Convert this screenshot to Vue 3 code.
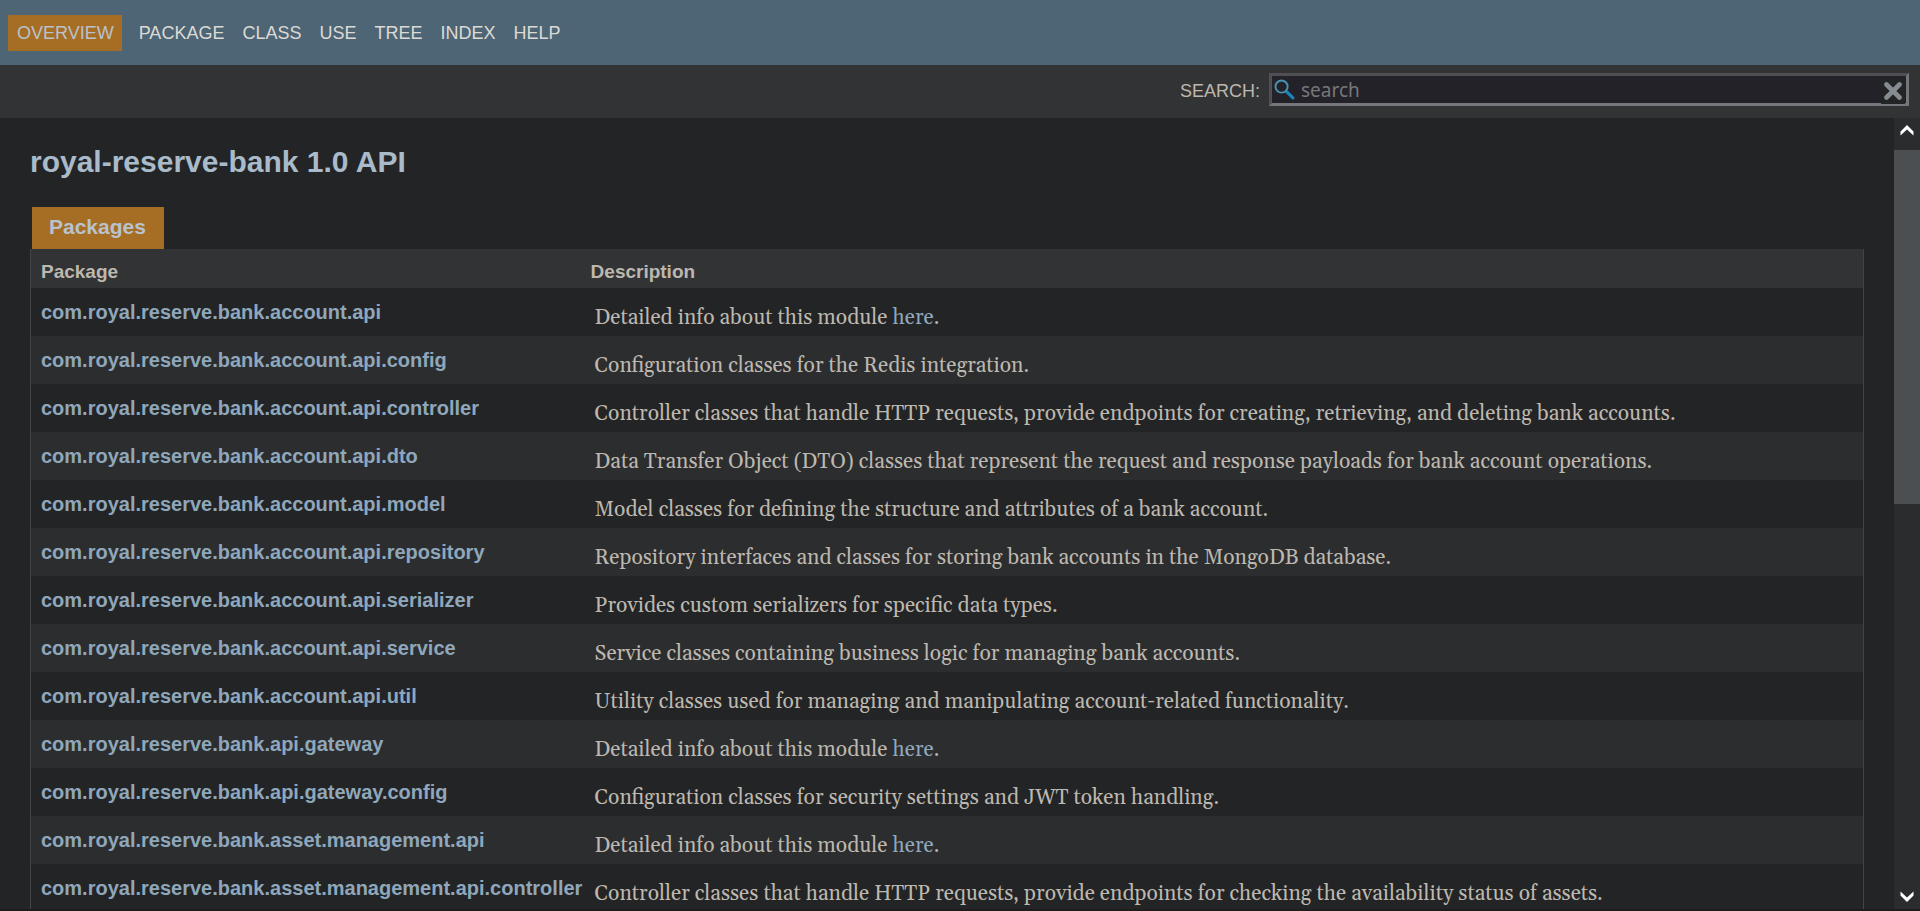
<script setup>
import { ref } from 'vue'

const query = ref('')
const nav = ['Package', 'Class', 'Use', 'Tree', 'Index', 'Help']
const base = 'com.royal.reserve.bank.'
const packages = [
  { name: 'account.api', module: true },
  { name: 'account.api.config', text: 'Configuration classes for the Redis integration.' },
  { name: 'account.api.controller', text: 'Controller classes that handle HTTP requests, provide endpoints for creating, retrieving, and deleting bank accounts.' },
  { name: 'account.api.dto', text: 'Data Transfer Object (DTO) classes that represent the request and response payloads for bank account operations.' },
  { name: 'account.api.model', text: 'Model classes for defining the structure and attributes of a bank account.' },
  { name: 'account.api.repository', text: 'Repository interfaces and classes for storing bank accounts in the MongoDB database.' },
  { name: 'account.api.serializer', text: 'Provides custom serializers for specific data types.' },
  { name: 'account.api.service', text: 'Service classes containing business logic for managing bank accounts.' },
  { name: 'account.api.util', text: 'Utility classes used for managing and manipulating account-related functionality.' },
  { name: 'api.gateway', module: true },
  { name: 'api.gateway.config', text: 'Configuration classes for security settings and JWT token handling.' },
  { name: 'asset.management.api', module: true },
  { name: 'asset.management.api.controller', text: 'Controller classes that handle HTTP requests, provide endpoints for checking the availability status of assets.' },
]
</script>

<template>
  <div class="page">
    <header>
      <nav class="top-nav">
        <ul>
          <li class="current">Overview</li>
          <li v-for="item in nav" :key="item"><a href="#">{{ item }}</a></li>
        </ul>
      </nav>
      <div class="sub-nav">
        <label for="search">SEARCH:</label>
        <div class="search-box">
          <svg class="glass" viewBox="0 0 20 20" aria-hidden="true">
            <path d="M12 12L18 18" stroke="#1f82bd" stroke-width="3" stroke-linecap="round" />
            <circle cx="7.2" cy="7.2" r="5.8" fill="none" stroke="#4b93b3" stroke-width="1.8" />
          </svg>
          <input id="search" v-model="query" type="text" placeholder="search" />
          <button class="reset" type="reset" aria-label="Clear search" @click="query = ''">
            <svg viewBox="0 0 18 18" aria-hidden="true">
              <path d="M2.5 2.5L15.5 15.5M15.5 2.5L2.5 15.5" stroke="#858b8f" stroke-width="4.6" stroke-linecap="round" />
            </svg>
          </button>
        </div>
      </div>
    </header>
    <div class="body">
      <main>
        <h1>royal-reserve-bank 1.0 API</h1>
        <table>
          <caption><span>Packages</span></caption>
          <thead>
            <tr><th class="first" scope="col">Package</th><th scope="col">Description</th></tr>
          </thead>
          <tbody>
            <tr v-for="p in packages" :key="p.name">
              <th class="first" scope="row"><a href="#">{{ base + p.name }}</a></th>
              <td>
                <template v-if="p.module">Detailed info about this module <a href="#">here</a>.</template>
                <template v-else>{{ p.text }}</template>
              </td>
            </tr>
          </tbody>
        </table>
      </main>
      <div class="scrollbar">
        <button type="button" aria-label="Scroll up">
          <svg viewBox="0 0 14 11" aria-hidden="true"><path d="M0.5 10.5V6.5L7 0L13.5 6.5V10.5L7 4.5Z" fill="#fff" /></svg>
        </button>
        <div class="thumb"></div>
        <div class="rest"></div>
        <button class="down" type="button" aria-label="Scroll down">
          <svg viewBox="0 0 14 11" aria-hidden="true"><path d="M0.5 0.5V4.5L7 11L13.5 4.5V0.5L7 6.5Z" fill="#fff" /></svg>
        </button>
      </div>
    </div>
  </div>
</template>

<style>
body {
  margin: 0;
  background: #232426;
}
</style>

<style scoped>
.page {
  display: flex;
  flex-direction: column;
  box-sizing: border-box;
  height: 100vh;
  border-bottom: 2px solid #1f1c1e;
  background: #232426;
  color: #bdb8af;
  font-family: Arial, "Liberation Sans", sans-serif;
}
a {
  color: #8fa7bb;
  text-decoration: none;
}
.top-nav {
  background: #4d6575;
  padding: 15px 8px 14px;
}
.top-nav ul {
  display: flex;
  gap: 18px;
  margin: 0;
  padding: 0;
  list-style: none;
  font-size: 18px;
  line-height: 20px;
  text-transform: uppercase;
}
.top-nav li {
  padding: 8px 0;
}
.top-nav a {
  color: #dddad5;
}
.top-nav .current {
  padding: 8px 8px 8px 9px;
  margin-right: -1px;
  background: #a66d25;
  color: #b9c2cb;
}
.sub-nav {
  display: flex;
  justify-content: flex-end;
  align-items: center;
  gap: 9px;
  padding: 8px 11px 12px;
  background: #323335;
  font-size: 18px;
}
.sub-nav label {
  padding-top: 3px;
}
.search-box {
  position: relative;
  width: 640px;
}
.search-box input {
  display: block;
  box-sizing: border-box;
  width: 100%;
  height: 33px;
  padding: 0 29px;
  border: 3px solid;
  border-color: #504f54 #76757b #76757b #504f54;
  border-radius: 0;
  outline: 0;
  background: #232228;
  color: #bdb8af;
  font: 19px "Noto Sans", sans-serif;
}
.search-box input::placeholder {
  color: #78767a;
  opacity: 1;
}
.glass {
  position: absolute;
  left: 5px;
  top: 6px;
  width: 21px;
  height: 21px;
}
.reset {
  position: absolute;
  right: 4px;
  top: 6px;
  display: grid;
  place-items: center;
  width: 24px;
  height: 25px;
  padding: 0 0 1px;
  border: 0;
  background: #232426;
}
.reset svg {
  width: 18px;
  height: 18px;
}
.body {
  display: flex;
  flex: 1;
  min-height: 0;
}
main {
  flex: 1;
  min-width: 0;
  overflow: hidden;
  padding: 26px 30px 0;
}
h1 {
  margin: 0 0 27px;
  color: #a9bbca;
  font-size: 30px;
  line-height: 36px;
}
table {
  width: 100%;
  table-layout: fixed;
  border-spacing: 0;
  border: solid #434446;
  border-width: 0 1px;
}
caption {
  text-align: left;
}
caption span {
  display: block;
  width: max-content;
  margin-left: 2px;
  padding: 8px 18px 10px 17px;
  background: #a66d25;
  color: #b9c2cb;
  font-size: 21px;
  font-weight: bold;
  line-height: 24px;
}
th,
td {
  text-align: left;
  vertical-align: top;
  line-height: 24px;
}
th {
  padding: 12px 10px;
  font-size: 20px;
}
.first {
  width: 30%;
  box-sizing: border-box;
}
thead th {
  padding: 11px 10px 4px;
  background: #323335;
  font-size: 19px;
}
td {
  padding: 18px 10px 6px 14px;
  font-family: Georgia, Gelasio, "Liberation Serif", serif;
  font-size: 21px;
}
tbody tr:nth-child(even) {
  background: #2c2d2f;
}
.scrollbar {
  display: flex;
  flex-direction: column;
  width: 26px;
  background: #2b2c2e;
}
.scrollbar button {
  height: 32px;
  padding: 7px 6px 14px;
  border: 0;
  background: none;
}
.scrollbar svg {
  display: block;
  width: 14px;
  height: 11px;
}
.scrollbar .down {
  padding: 14px 6px 7px;
}
.thumb {
  flex: 354;
  background: #4c4f51;
}
.rest {
  flex: 373;
}
</style>
